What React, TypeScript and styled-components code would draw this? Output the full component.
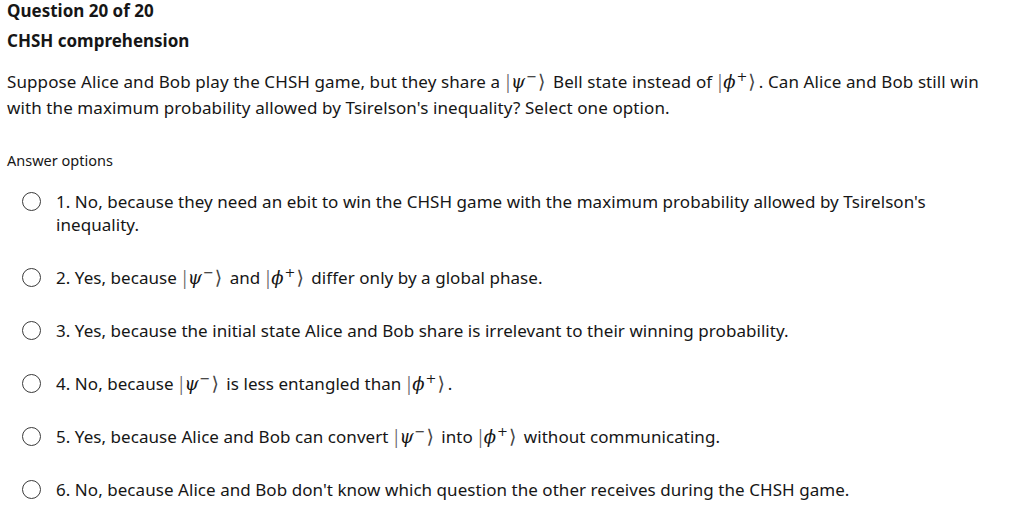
import React, { FC, ReactNode } from "react";
import styled, { createGlobalStyle } from "styled-components";

const GlobalStyle = createGlobalStyle`
  body {
    margin: 0;
    background: #ffffff;
    color: #161616;
    font-family: "Noto Sans", "Open Sans", sans-serif;
  }
`;

const Page = styled.div`
  padding: 0 7px;
`;

const Heading = styled.div`
  font-size: 17px;
  font-weight: 700;
  line-height: 20px;
`;

const QuestionNo = styled(Heading)`
  padding-top: 1px;
`;

const Title = styled(Heading)`
  margin-top: 10px;
`;

const Prompt = styled.p`
  margin: 18px 0 0;
  font-size: 17px;
  line-height: 26px;
  letter-spacing: 0.1px;
  max-width: 990px;
`;

const Legend = styled.div`
  margin-top: 30px;
  font-size: 14.5px;
  line-height: 18px;
`;

const OptionList = styled.div`
  margin-top: 21px;
  padding-left: 15px;
  display: flex;
  flex-direction: column;
  gap: 30px;
`;

const OptionRow = styled.label`
  display: flex;
  align-items: flex-start;
  gap: 15px;
  font-size: 17px;
  line-height: 23px;
  letter-spacing: 0.05px;
`;

const Radio = styled.span`
  flex: none;
  box-sizing: border-box;
  width: 19px;
  height: 19px;
  margin-top: 2px;
  border: 1.6px solid #3a3a3a;
  border-radius: 50%;
`;

const OptionText = styled.span`
  max-width: 900px;
`;

const Ket = styled.span`
  font-family: "DejaVu Serif", "Liberation Serif", serif;
  white-space: nowrap;
  line-height: 0;
  letter-spacing: 0;
  margin: 0 3px 0 1px;
`;

const Bar = styled.span`
  font-family: "Liberation Serif", serif;
  font-size: 22px;
  color: #666;
  margin-right: 1px;
`;

const Sym = styled.i`
  font-size: 18px;
`;

const Sup = styled.span`
  font-size: 13px;
  vertical-align: 7px;
  margin-left: 1px;
`;

const Angle = styled.span`
  font-size: 19px;
  color: #444;
  margin-left: 1px;
`;

const Psi: FC = () => (
  <Ket>
    <Bar>|</Bar>
    <Sym>ψ</Sym>
    <Sup>−</Sup>
    <Angle>⟩</Angle>
  </Ket>
);

const Phi: FC = () => (
  <Ket>
    <Bar>|</Bar>
    <Sym>ϕ</Sym>
    <Sup>+</Sup>
    <Angle>⟩</Angle>
  </Ket>
);

const options: ReactNode[] = [
  <>1. No, because they need an ebit to win the CHSH game with the maximum probability allowed by Tsirelson's inequality.</>,
  <>
    2. Yes, because <Psi /> and <Phi /> differ only by a global phase.
  </>,
  <>3. Yes, because the initial state Alice and Bob share is irrelevant to their winning probability.</>,
  <>
    4. No, because <Psi /> is less entangled than <Phi />.
  </>,
  <>
    5. Yes, because Alice and Bob can convert <Psi /> into <Phi /> without communicating.
  </>,
  <>6. No, because Alice and Bob don't know which question the other receives during the CHSH game.</>,
];

const App: FC = () => {
  return (
    <Page>
      <GlobalStyle />
      <QuestionNo>Question 20 of 20</QuestionNo>
      <Title>CHSH comprehension</Title>
      <Prompt>
        <span>Suppose Alice and Bob play the CHSH game, but they share a</span> <Psi /> <span>Bell state instead of</span>{" "}
        <Phi />
        <span>. Can Alice and Bob still win</span>{" "}
        <span>with the maximum probability allowed by Tsirelson's inequality? Select one option.</span>
      </Prompt>
      <Legend>Answer options</Legend>
      <OptionList>
        {options.map((text, index) => (
          <OptionRow key={index}>
            <Radio />
            <OptionText>{text}</OptionText>
          </OptionRow>
        ))}
      </OptionList>
    </Page>
  );
};

export default App;
